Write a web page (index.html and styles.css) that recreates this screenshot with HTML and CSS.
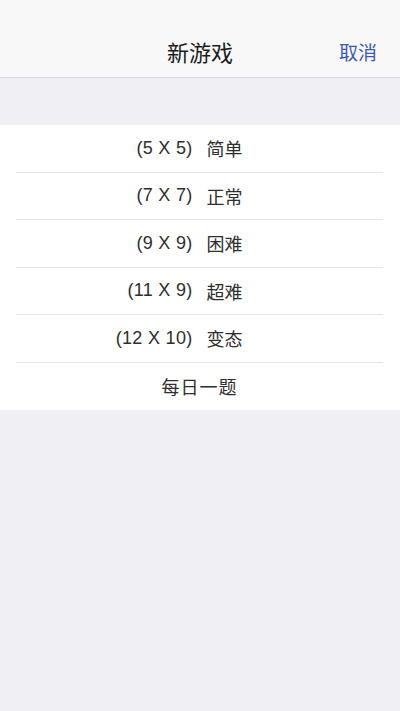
FILE: index.html
```html
<!DOCTYPE html>
<html lang="zh">
<head>
<meta charset="utf-8">
<title>新游戏</title>
<link rel="stylesheet" href="styles.css">
</head>
<body>
<header class="navbar">
  <div class="navbar-inner">
    <span class="nav-title">新游戏</span>
    <span class="nav-cancel">取消</span>
  </div>
</header>
<div class="spacer"></div>
<ul class="list">
  <li class="row"><span class="size">(5 X 5)</span><span class="level">简单</span></li>
  <li class="row"><span class="size">(7 X 7)</span><span class="level">正常</span></li>
  <li class="row"><span class="size">(9 X 9)</span><span class="level">困难</span></li>
  <li class="row"><span class="size">(11 X 9)</span><span class="level">超难</span></li>
  <li class="row"><span class="size">(12 X 10)</span><span class="level">变态</span></li>
  <li class="row row-single"><span class="daily">每日一题</span></li>
</ul>
</body>
</html>
```
FILE: styles.css
```css
html, body {
  margin: 0;
  padding: 0;
}
body {
  background: #efeff4;
  font-family: "Liberation Sans", "Noto Sans CJK SC", sans-serif;
  color: #333;
  width: 400px;
  height: 711px;
  overflow: hidden;
}
.navbar {
  background: #f8f8f8;
  height: 77px;
  border-bottom: 1px solid #d8d8dc;
  box-sizing: content-box;
}
.navbar-inner {
  padding-top: 29px;
  height: 44px;
  display: grid;
  grid-template-columns: 1fr auto 1fr;
  align-items: center;
}
.nav-title {
  grid-column: 2;
  font-size: 22px;
  color: #1c1c1c;
}
.nav-cancel {
  grid-column: 3;
  justify-self: end;
  margin-right: 23px;
  font-size: 19px;
  color: #3b5cab;
}
.spacer {
  height: 47px;
}
.list {
  list-style: none;
  margin: 0;
  padding: 0;
  background: #fff;
}
.row {
  margin: 0 17px 0 16px;
  height: 46.5px;
  border-bottom: 1px solid #e4e4e6;
  display: grid;
  grid-template-columns: 1fr 1fr;
  column-gap: 14px;
  align-items: center;
  font-size: 18px;
  color: #2e2e2e;
}
.row:last-child {
  border-bottom: none;
  height: 47.5px;
}
.size {
  text-align: right;
  letter-spacing: 0.3px;
}
.level {
  text-align: left;
}
.row-single {
  grid-template-columns: 1fr;
}
.daily {
  text-align: center;
  letter-spacing: 1px;
}
```
